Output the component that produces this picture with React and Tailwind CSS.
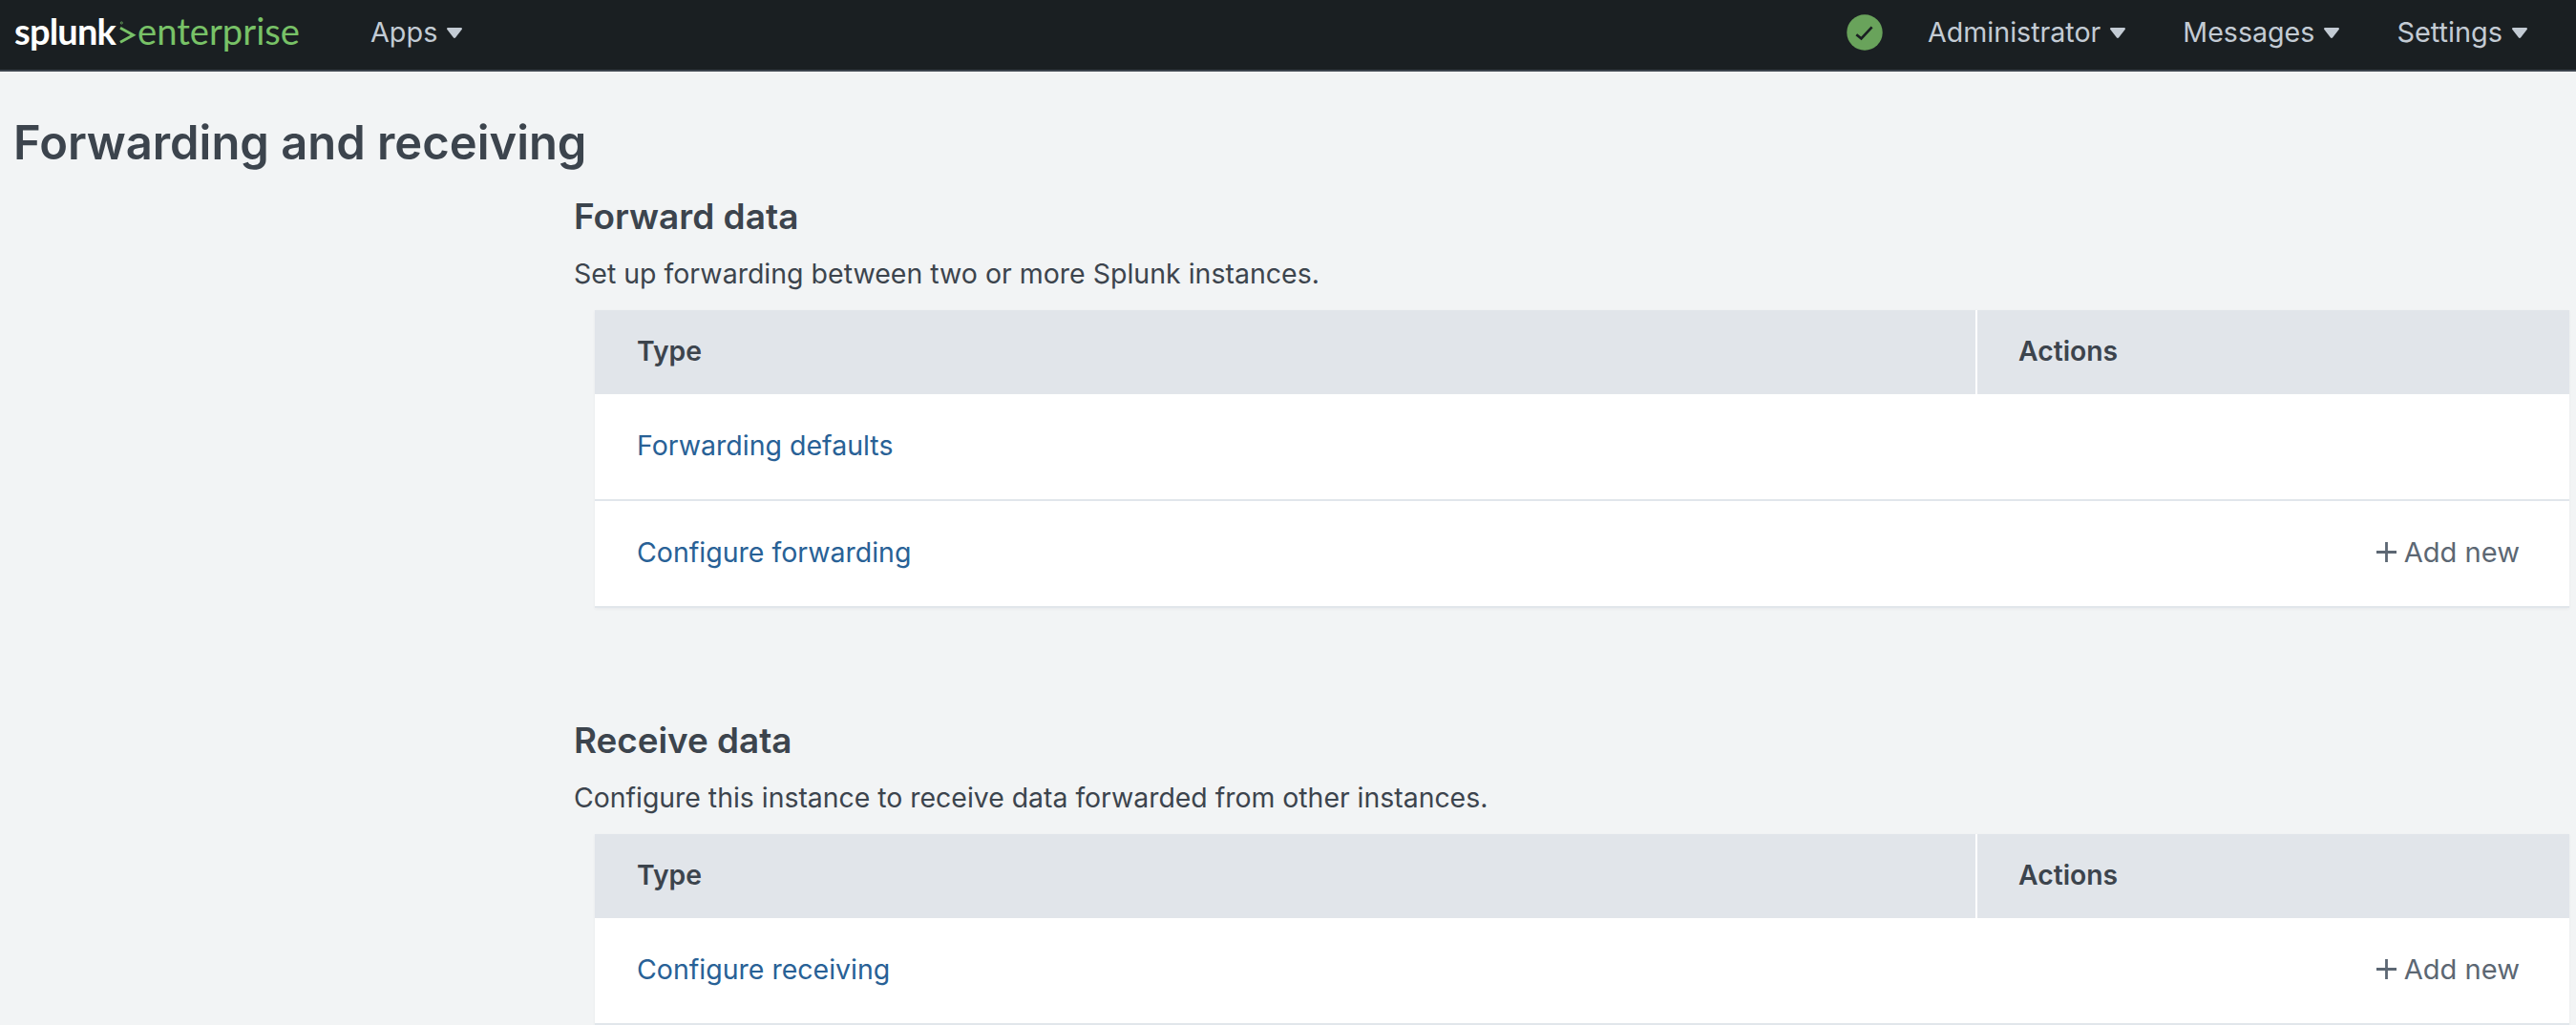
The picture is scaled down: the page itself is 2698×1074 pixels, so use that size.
function Caret({ className = "" }) {
  return (
    <svg viewBox="0 0 16 11" className={"h-[11px] w-4 shrink-0 fill-[#c3cbd4] " + className}>
      <path d="M1.4 0h13.2c1.2 0 1.8 1.2 1 2.1L9.2 10.2c-.7.9-1.7.9-2.4 0L.4 2.1C-.4 1.2.2 0 1.4 0Z" />
    </svg>
  );
}

function NavItem({ label, className }) {
  return (
    <button className={"flex items-center whitespace-nowrap leading-9 text-[#c3cbd4] " + className}>
      <span>{label}</span>
      <Caret className="ml-[10px] mt-px" />
    </button>
  );
}

function Logo() {
  return (
    <div className="flex w-[300px] items-start font-[Lato,sans-serif] leading-[42px]">
      <span className="w-[110px] text-[38px] font-bold tracking-[-0.8px] text-white">splunk</span>
      <span className="h-[46px] w-[19px]">
        <svg viewBox="0 0 19 46" className="h-full w-full overflow-visible" fill="none" stroke="#78c267">
          <path d="M1 18.3 14.5 25.7 1 33.2" strokeWidth="3" />
          <circle cx="2.3" cy="13" r="1.1" strokeWidth="0.7" />
        </svg>
      </span>
      <span className="text-[38.2px] text-[#78c267]">enterprise</span>
    </div>
  );
}

function StatusBadge() {
  return (
    <svg viewBox="0 0 38 38" className="h-[38px] w-[38px] shrink-0" fill="none">
      <circle cx="19" cy="19" r="18.7" fill="#69a35b" />
      <path d="m10.3 21.3 5.1 4 11.2-12" stroke="#1a1f22" strokeWidth="2.7" />
    </svg>
  );
}

function AddNew() {
  return (
    <a className="flex items-center text-[29.1px] text-[#5c6773]">
      <svg viewBox="0 0 21 21" className="mr-[8px] h-[21px] w-[21px]" stroke="currentColor" strokeWidth="2.8">
        <path d="M10.5 0v21M0 10.5h21" />
      </svg>
      <span>Add new</span>
    </a>
  );
}

function Section({ title, titleSize, description, descriptionSize, rows }) {
  return (
    <section>
      <h2 className={"font-semibold leading-[44px] " + titleSize}>{title}</h2>
      <p className={"mt-5 leading-9 " + descriptionSize}>{description}</p>
      <div className="ml-[22px] mr-[7px] mt-5 bg-white shadow-[0_1px_3px_rgba(60,68,77,0.06)]">
        <div className="grid h-[88px] grid-cols-[1446px_1fr] gap-[2px] text-[28.3px] font-semibold">
          <div className="flex items-center bg-[#e1e5ea] pb-px pl-[44px]">Type</div>
          <div className="flex items-center bg-[#e1e5ea] pb-px pl-[43px]">Actions</div>
        </div>
        {rows.map((row) => (
          <div
            key={row.label}
            className="flex h-[112px] items-center justify-between border-b-2 border-[#e1e6eb] pb-[2px] pl-[44px] pr-[52px]"
          >
            <a className="text-[28.5px] text-[#286196]">{row.label}</a>
            {row.add && <AddNew />}
          </div>
        ))}
      </div>
    </section>
  );
}

export default function App() {
  return (
    <div className="h-[1074px] overflow-hidden bg-[#f2f4f5] font-[Inter,sans-serif] text-[#3c444d]">
      <header className="flex h-[75px] items-center border-b-2 border-[#3c444d] bg-[#1a1f22] pb-[6px] pl-[15px] pr-[51px]">
        <Logo />
        <NavItem label="Apps" className="ml-[73px] text-[28.8px]" />
        <div className="ml-auto flex items-center">
          <StatusBadge />
          <NavItem label="Administrator" className="ml-[47px] text-[28.6px]" />
          <NavItem label="Messages" className="ml-[60px] text-[28.6px]" />
          <NavItem label="Settings" className="ml-[60px] text-[28.9px]" />
        </div>
      </header>
      <main className="pt-[45px]">
        <h1 className="pl-[14px] text-[48.9px] font-semibold leading-[60px]">Forwarding and receiving</h1>
        <div className="mt-[25px] flex flex-col gap-[117px] pl-[601px]">
          <Section
            title="Forward data"
            titleSize="text-[37px]"
            description="Set up forwarding between two or more Splunk instances."
            descriptionSize="text-[28.5px]"
            rows={[{ label: "Forwarding defaults" }, { label: "Configure forwarding", add: true }]}
          />
          <Section
            title="Receive data"
            titleSize="text-[36.8px]"
            description="Configure this instance to receive data forwarded from other instances."
            descriptionSize="text-[28.4px]"
            rows={[{ label: "Configure receiving", add: true }]}
          />
        </div>
      </main>
    </div>
  );
}
